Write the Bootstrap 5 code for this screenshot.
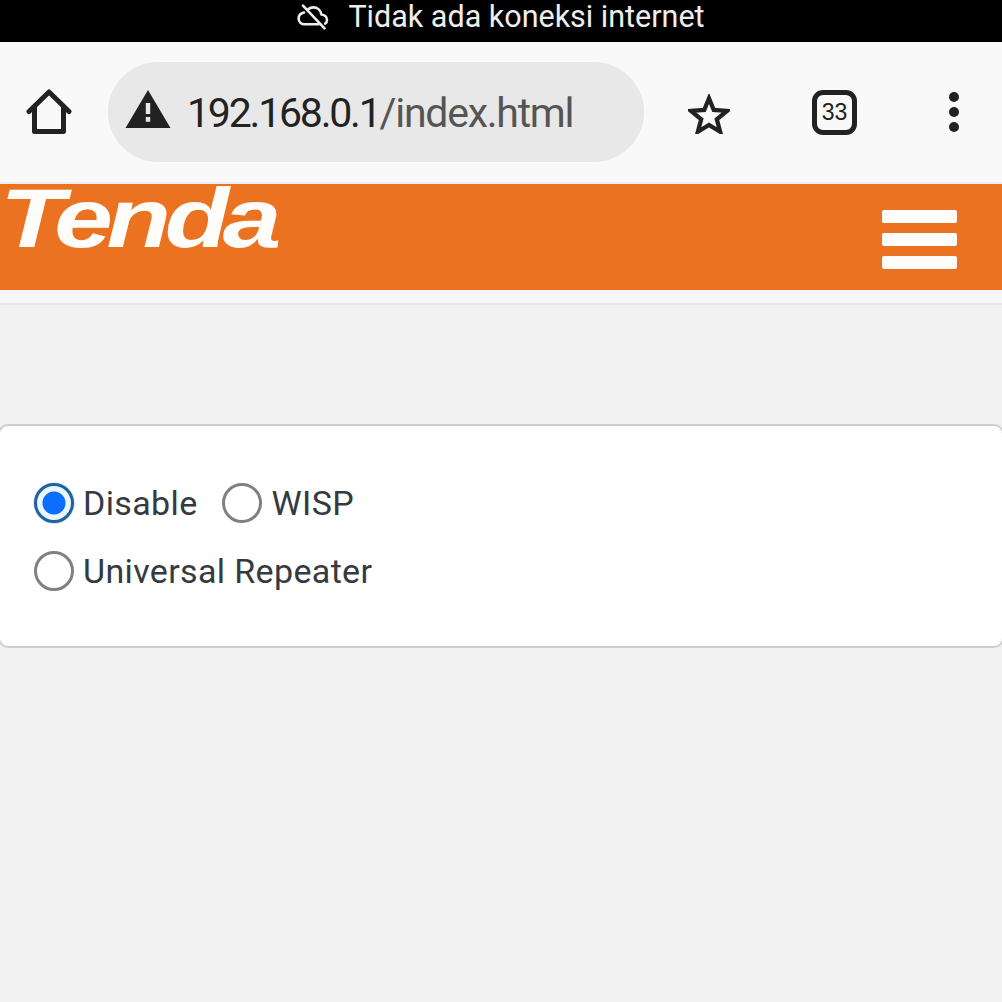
<!DOCTYPE html>
<html lang="en">
<head>
<meta charset="UTF-8">
<meta name="viewport" content="width=device-width, initial-scale=1.0">
<title>Tenda</title>
<link href="https://cdn.jsdelivr.net/npm/bootstrap@5.3.0/dist/css/bootstrap.min.css" rel="stylesheet">
<script src="https://cdn.jsdelivr.net/npm/bootstrap@5.3.0/dist/js/bootstrap.bundle.min.js"></script>
<style>
    html, body {
        height: 100%;
    }
    body {
        font-family: Roboto, "Liberation Sans", sans-serif;
        background: #f1f1f1;
        overflow: hidden;
    }
    .status-strip {
        height: 42px;
        padding-bottom: 9px;
        background: #000;
        color: #eeeeee;
        font-size: 30.5px;
        line-height: 33px;
    }
    .status-strip svg {
        margin-right: 19px;
    }
    .browser-bar {
        height: 142px;
        padding: 20px 0 20px 0;
        background: #f9f9f9;
        border-bottom: 2px solid #eeeeee;
    }
    .home-btn {
        width: 108px;
        padding-right: 10px;
    }
    .url-pill {
        width: 536px;
        height: 100px;
        padding-left: 17px;
        background: #e8e8e8;
        border-radius: 50px;
        font-size: 41px;
        color: #222;
    }
    .url-pill svg {
        margin-right: 16px;
        margin-top: -7px;
    }
    .url-text {
        padding-top: 4px;
        letter-spacing: -2.2px;
    }
    .url-rest {
        color: #555;
        letter-spacing: -1.25px;
    }
    .browser-actions {
        flex: 1;
        padding-left: 44px;
    }
    .star-icon {
        margin-right: 82px;
        margin-top: 3px;
    }
    .tab-count {
        width: 45px;
        height: 45px;
        margin-right: 92px;
        border: 5px solid #222;
        border-radius: 11px;
        font-size: 23px;
        color: #222;
        font-family: "Liberation Sans", sans-serif;
    }
    .dots-col {
        gap: 5px;
    }
    .dots-col span {
        width: 10px;
        height: 10px;
        background: #222;
        border-radius: 50%;
    }
    .orange-head {
        height: 106px;
        background: #eb7220;
        padding-right: 45px;
    }
    .tenda-logo {
        margin-top: -9px;
        font-family: "Liberation Sans", sans-serif;
        font-size: 84px;
        line-height: 86px;
        font-weight: 700;
        font-style: italic;
        color: #fffdf9;
        letter-spacing: -5px;
        transform: scaleX(1.255);
        transform-origin: left top;
    }
    .burger {
        width: 75px;
        gap: 10px;
        margin-top: 26px;
    }
    .burger span {
        height: 13px;
        background: #fffdf9;
        border-radius: 2px;
    }
    .head-shadow {
        height: 15px;
        background: #f6f6f6;
        border-bottom: 2px solid #e6e6e6;
    }
    .mode-panel {
        margin: 119px -2px 0;
        height: 224px;
        padding: 57px 34px 0;
        background: #fff;
        border: 2px solid #cfcfcf;
        border-radius: 10px;
    }
    .mode-row {
        height: 40px;
        margin-bottom: 28px;
    }
    .mode-option {
        margin-right: 24px;
    }
    .mode-option .form-check-input {
        width: 40px;
        height: 40px;
        margin: 0 10px 0 0;
        border: 3px solid #808080;
        background-color: #fff;
    }
    .mode-option:first-child .form-check-input {
        margin-right: 9px;
    }
    .mode-option .form-check-input:checked {
        border-color: #245f9e;
        background-color: #e9f6ff;
        background-image: radial-gradient(circle, #0d6efd 0, #0d6efd 11px, #e9f6ff 12px);
        box-shadow: 0 0 0 1px #cdeeff;
    }
    .mode-option label {
        font-size: 34px;
        line-height: 40px;
        color: #343a40;
        letter-spacing: 0.36px;
    }
</style>
</head>
<body>
    <div class="status-strip d-flex justify-content-center align-items-center">
        <svg width="32" height="26" viewBox="0 0 32 26" fill="none" stroke="#eeeeee" stroke-width="2.6" stroke-linecap="round" stroke-linejoin="round">
            <path d="M7 8.500C3.600 9.300 1.600 11.800 1.600 14.600c0 3.400 2.800 5.700 6 5.700h14"/>
            <path d="M11 5.200C12.600 4 14.400 3.400 16.300 3.400c4.200 0 7.500 3 8.100 7.100 3.200.3 5.600 2.600 5.600 5.400 0 1.500-.6 2.800-1.700 3.700"/>
            <path d="M6 1.600 27.500 24.400"/>
        </svg>
        <span>Tidak ada koneksi internet</span>
    </div>

    <div class="browser-bar d-flex align-items-center">
        <div class="home-btn d-flex justify-content-center flex-shrink-0">
            <svg width="46" height="46" viewBox="0 0 46 46" fill="none" stroke="#222" stroke-width="5" stroke-linejoin="round" stroke-linecap="round">
                <path d="M3 22.500 23 3l20 19.500"/>
                <path d="M8.500 18v24.500h29V18"/>
            </svg>
        </div>
        <div class="url-pill d-flex align-items-center flex-shrink-0">
            <svg width="46" height="40" viewBox="0 0 46 40">
                <path d="M23 1 45.500 39H.5z" fill="#222"/>
                <rect x="20.800" y="14" width="4.400" height="11" fill="#e8e8e8"/>
                <rect x="20.800" y="28" width="4.400" height="4.800" fill="#e8e8e8"/>
            </svg>
            <span class="url-text">192.168.0.1<span class="url-rest">/index.html</span></span>
        </div>
        <div class="browser-actions d-flex align-items-center">
            <svg class="star-icon" width="42" height="40" viewBox="0 0 44 42" fill="none" stroke="#222" stroke-width="4.500" stroke-linejoin="miter">
                <path d="M22 4.500 27 16.800l14 1-10.800 8.800 3.500 13L22 32.500 10.300 39.600l3.500-13L3 17.800l14-1z"/>
            </svg>
            <div class="tab-count d-flex justify-content-center align-items-center">33</div>
            <div class="dots-col d-flex flex-column">
                <span></span><span></span><span></span>
            </div>
        </div>
    </div>

    <div class="orange-head d-flex justify-content-between align-items-start">
        <div class="tenda-logo">Tenda</div>
        <div class="burger d-flex flex-column">
            <span></span><span></span><span></span>
        </div>
    </div>
    <div class="head-shadow"></div>

    <div class="mode-panel">
        <div class="mode-row d-flex align-items-center">
            <div class="mode-option d-flex align-items-center">
                <input class="form-check-input" type="radio" name="wifiMode" id="modeDisable" checked>
                <label for="modeDisable">Disable</label>
            </div>
            <div class="mode-option d-flex align-items-center">
                <input class="form-check-input" type="radio" name="wifiMode" id="modeWisp">
                <label for="modeWisp">WISP</label>
            </div>
        </div>
        <div class="mode-row d-flex align-items-center">
            <div class="mode-option d-flex align-items-center">
                <input class="form-check-input" type="radio" name="wifiMode" id="modeRepeater">
                <label for="modeRepeater">Universal Repeater</label>
            </div>
        </div>
    </div>
</body>
</html>
